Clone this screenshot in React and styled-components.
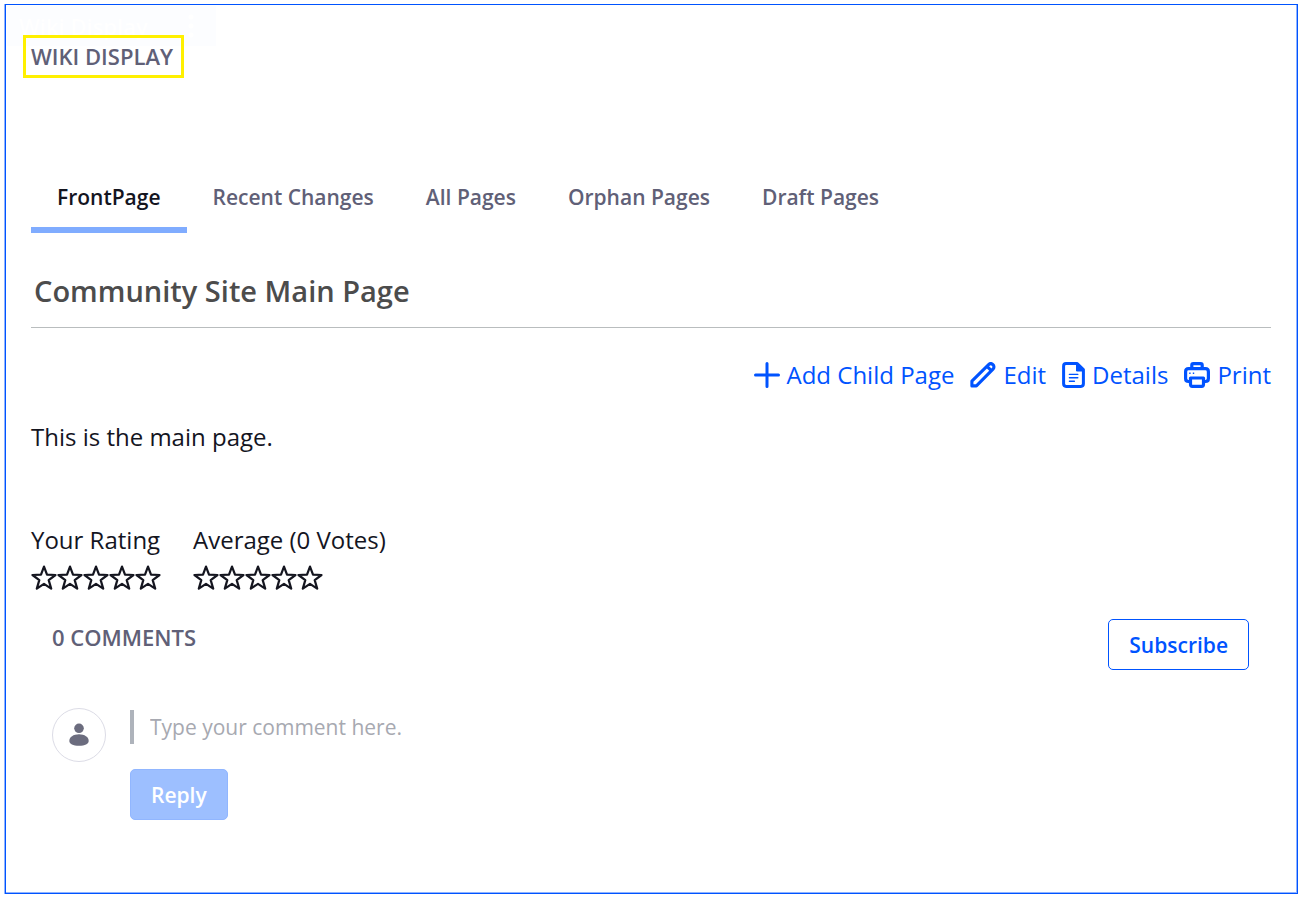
import React from "react";
import styled, { createGlobalStyle } from "styled-components";

const GlobalStyle = createGlobalStyle`
  *, *::before, *::after { box-sizing: border-box; }
  body {
    margin: 0;
    background: #fff;
    color: #14151f;
    font-family: "Segoe UI", "Open Sans", "Noto Sans", sans-serif;
    font-size: 24px;
    line-height: 36px;
  }
  h1, h2, p, ul { margin: 0; padding: 0; }
`;

const Portlet = styled.main`
  position: relative;
  margin: 4px 5px 9px 5px;
  padding: 30px 26px 73px 25px;
  border: 1px solid #0053ff;
  box-shadow: -1px 0 #8fb3ff, inset -1px -1px #8fb3ff;
`;

const Topper = styled.div`
  position: absolute;
  top: 1px;
  left: 1px;
  display: flex;
  align-items: center;
  justify-content: space-between;
  width: 209px;
  height: 40px;
  padding: 0 22px 0 12px;
  background: #fcfdff;
  color: #fff;
  font-size: 22px;
  font-weight: 600;
`;

const Highlight = styled.div`
  position: relative;
  width: max-content;
  margin-left: -8px;
  padding: 0 8px 1px 5px;
  border: 3px solid #fff000;
`;

const SectionTitle = styled.h2`
  color: #606077;
  font-size: 22px;
  line-height: 36px;
  font-weight: 600;
`;

const Tabs = styled.nav`
  display: flex;
  margin-top: 84px;
`;

const Tab = styled.a`
  padding: 17px 26px 12px;
  border-bottom: 6px solid ${(p) => (p.$active ? "#80acff" : "transparent")};
  color: ${(p) => (p.$active ? "#14151f" : "#606077")};
  font-size: 21px;
  font-weight: 600;
  text-decoration: none;
`;

const PageTitle = styled.h1`
  margin-top: 36px;
  padding: 0 3px 14px;
  border-bottom: 1px solid #b9bdbe;
  color: #4c4c4c;
  font-size: 29px;
  line-height: 44px;
  font-weight: 600;
`;

const Actions = styled.div`
  display: flex;
  justify-content: flex-end;
  gap: 16px;
  margin-top: 29px;
`;

const Action = styled.a`
  display: flex;
  align-items: center;
  gap: 7px;
  color: #0053ff;
  text-decoration: none;
`;

const Icon = styled.svg`
  display: block;
  flex: none;
  width: ${(p) => p.$width || 26}px;
  height: 26px;
`;

const Body = styled.p`
  margin-top: 26px;
`;

const Ratings = styled.div`
  display: flex;
  gap: 32px;
  margin-top: 67px;
`;

const Stars = styled.div`
  display: flex;
  margin-top: 7px;
`;

const Comments = styled.section`
  margin-top: 28px;
  padding: 0 22px 0 21px;
`;

const CommentsHeader = styled.div`
  display: flex;
  align-items: flex-start;
  justify-content: space-between;
`;

const Button = styled.button`
  height: 51px;
  padding: 0 20px;
  border: 1px solid ${(p) => (p.$primary ? "#91b6ff" : "#0053ff")};
  border-radius: 5px;
  background: ${(p) => (p.$primary ? "#9dbfff" : "#fff")};
  color: ${(p) => (p.$primary ? "#fff" : "#0053ff")};
  font: inherit;
  font-size: 21px;
  font-weight: 600;
`;

const CommentForm = styled.form`
  display: flex;
  align-items: flex-start;
  gap: 24px;
  margin-top: 38px;
`;

const Avatar = styled.div`
  display: grid;
  place-items: center;
  width: 54px;
  height: 54px;
  border: 1px solid #dcdce6;
  border-radius: 50%;
`;

const Editor = styled.div`
  flex: 1;
`;

const CommentInput = styled.input`
  display: block;
  width: 100%;
  height: 34px;
  margin: 2px 0 25px;
  padding: 0 16px;
  border: 0;
  border-left: 4px solid #aeb3bb;
  background: transparent;
  font: inherit;
  font-size: 21px;
  &::placeholder { color: #a7a9b1; opacity: 1; }
`;

function PlusIcon() {
  return (
    <Icon viewBox="0 0 26 26" aria-hidden="true">
      <path d="M13 1.5v23M1.5 13h23" stroke="currentColor" strokeWidth="3" strokeLinecap="round" />
    </Icon>
  );
}

function PencilIcon() {
  return (
    <Icon viewBox="0 0 26 26" aria-hidden="true" fill="none" stroke="currentColor" strokeWidth="3.1" strokeLinejoin="round">
      <path d="M1.9 19.2 18.6 2.6c1.2-1.2 3-1.2 4.2-.1 1.5 1.3 1.5 3.4.2 4.7L6.4 23.9H1.9z" />
      <path d="m17 4.3 4.6 4.6" />
    </Icon>
  );
}

function DocumentIcon() {
  return (
    <Icon $width={23} viewBox="0 0 23 26" aria-hidden="true" fill="none" stroke="currentColor">
      <path d="M4 1.6h11.2l6.2 6v14.2c0 1.6-1 2.6-2.5 2.6H4.1c-1.5 0-2.5-1-2.5-2.6V4.2c0-1.6.9-2.6 2.4-2.6z" strokeWidth="3" strokeLinejoin="round" />
      <path d="M14.5 2v7h7.2z" fill="currentColor" />
      <path d="M7.4 12.4h8.4M7.4 15.8h8.4M7.4 19.2h5" strokeWidth="1.4" strokeLinecap="round" />
    </Icon>
  );
}

function PrinterIcon() {
  return (
    <Icon viewBox="0 0 26 26" aria-hidden="true" fill="none" stroke="currentColor" strokeWidth="3.2">
      <path d="M7.8 7V3.2c0-1.1.5-1.6 1.5-1.6h7.4c1 0 1.5.5 1.5 1.6V7" />
      <path d="M6.3 19.5H4.6c-2 0-3-1-3-3V9.7c0-2 1-3 3-3h16.8c2 0 3 1 3 3v6.8c0 2-1 3-3 3h-1.7" />
      <path d="M6.5 16h13v6.3c0 1.3-.6 2-1.8 2H8.3c-1.2 0-1.8-.7-1.8-2z" strokeLinejoin="round" />
      <path d="M5.2 11.2h1.4M8.8 11.2h1.4" strokeWidth="1.4" />
    </Icon>
  );
}

function StarIcon() {
  return (
    <Icon viewBox="0 0 26 26" aria-hidden="true">
      <path
        d="m13 1.6 3 8.1 8.5.3-6.8 5.1 2.5 8.5L13 18.8l-7.2 4.8 2.5-8.5L1.5 10l8.5-.3z"
        fill="none"
        stroke="currentColor"
        strokeWidth="2.2"
        strokeLinejoin="round"
      />
    </Icon>
  );
}

function UserIcon() {
  return (
    <Icon viewBox="0 0 26 26" aria-hidden="true" fill="#6b6c7e">
      <circle cx="13" cy="6.3" r="4.8" />
      <path d="M13 12.3c5.6 0 9.7 2.8 9.7 6.7 0 3-3.8 4.8-9.7 4.8S3.3 22 3.3 19c0-3.9 4.1-6.7 9.7-6.7z" />
    </Icon>
  );
}

function DotsIcon() {
  return (
    <Icon $width={6} viewBox="0 0 6 26" aria-hidden="true" fill="currentColor">
      <circle cx="3" cy="4" r="2.5" />
      <circle cx="3" cy="13" r="2.5" />
      <circle cx="3" cy="22" r="2.5" />
    </Icon>
  );
}

const tabs = ["FrontPage", "Recent Changes", "All Pages", "Orphan Pages", "Draft Pages"];

const actions = [
  { label: "Add Child Page", Glyph: PlusIcon },
  { label: "Edit", Glyph: PencilIcon },
  { label: "Details", Glyph: DocumentIcon },
  { label: "Print", Glyph: PrinterIcon },
];

function Rating({ label }) {
  return (
    <div>
      <div>{label}</div>
      <Stars role="img" aria-label="0 of 5 stars">
        {[1, 2, 3, 4, 5].map((n) => (
          <StarIcon key={n} />
        ))}
      </Stars>
    </div>
  );
}

export default function App() {
  return (
    <>
      <GlobalStyle />
      <Portlet>
        <Topper>
          <span>Wiki Display</span>
          <DotsIcon />
        </Topper>
        <Highlight>
          <SectionTitle>WIKI DISPLAY</SectionTitle>
        </Highlight>
        <Tabs>
          {tabs.map((tab, i) => (
            <Tab key={tab} href="#" $active={i === 0}>
              {tab}
            </Tab>
          ))}
        </Tabs>
        <PageTitle>Community Site Main Page</PageTitle>
        <Actions>
          {actions.map(({ label, Glyph }) => (
            <Action key={label} href="#">
              <Glyph />
              {label}
            </Action>
          ))}
        </Actions>
        <Body>This is the main page.</Body>
        <Ratings>
          <Rating label="Your Rating" />
          <Rating label="Average (0 Votes)" />
        </Ratings>
        <Comments>
          <CommentsHeader>
            <SectionTitle>0 COMMENTS</SectionTitle>
            <Button type="button">Subscribe</Button>
          </CommentsHeader>
          <CommentForm onSubmit={(e) => e.preventDefault()}>
            <Avatar>
              <UserIcon />
            </Avatar>
            <Editor>
              <CommentInput type="text" aria-label="Comment" placeholder="Type your comment here." />
              <Button $primary type="submit">Reply</Button>
            </Editor>
          </CommentForm>
        </Comments>
      </Portlet>
    </>
  );
}
